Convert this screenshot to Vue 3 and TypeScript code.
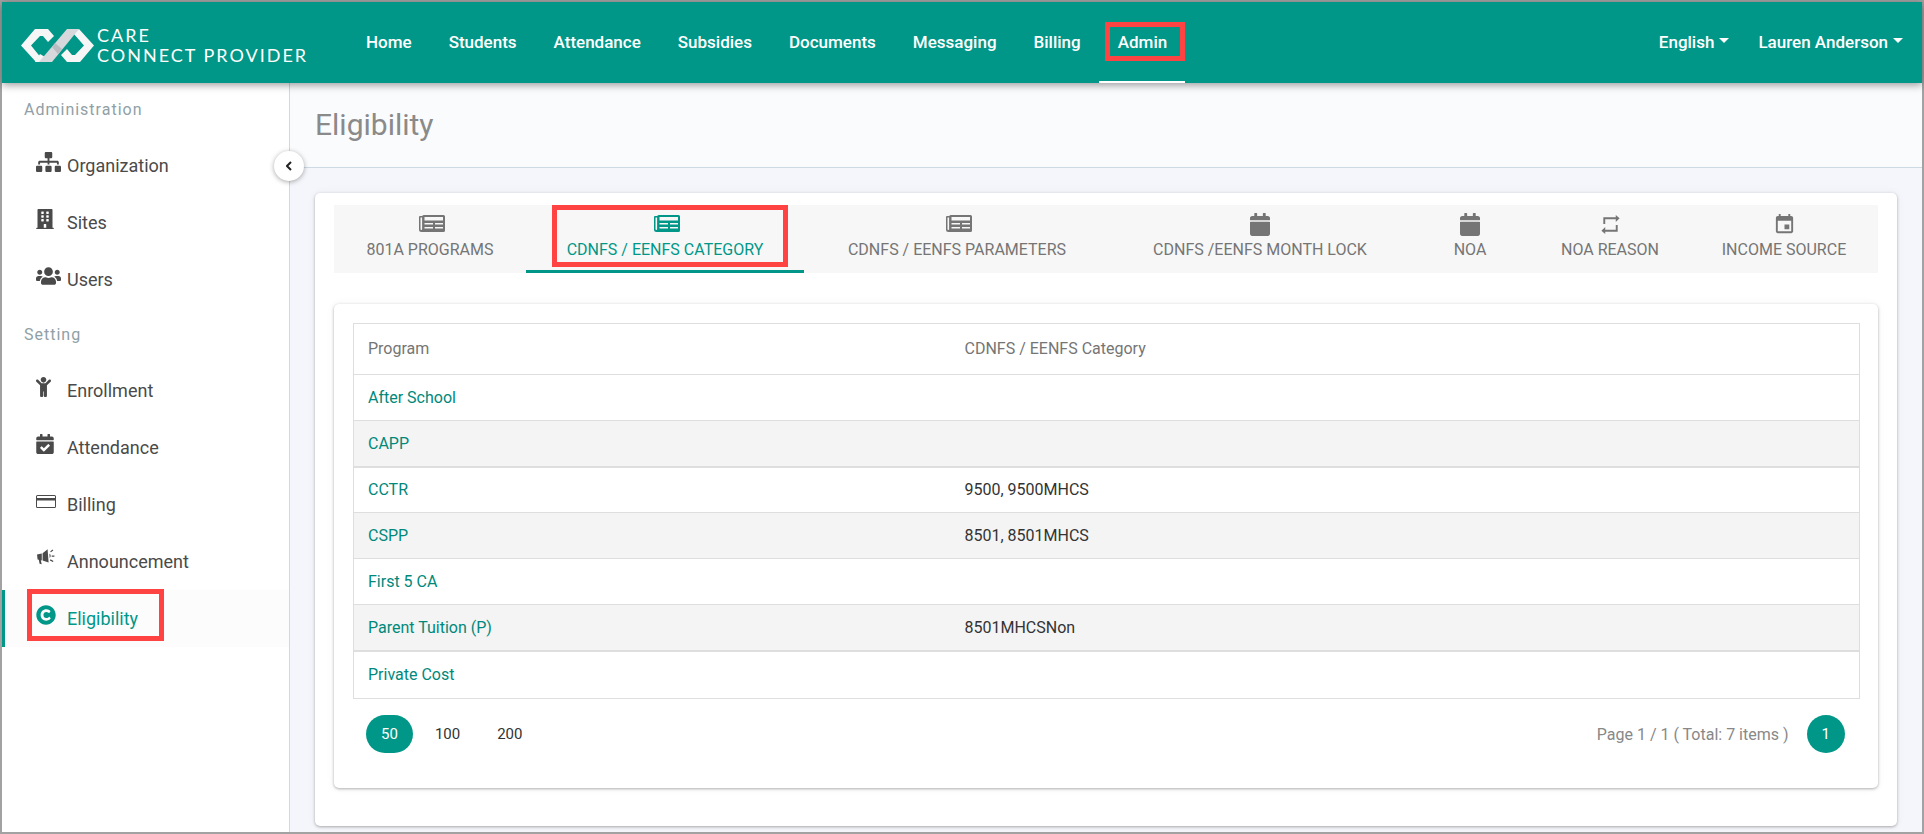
<script setup lang="ts">
import { ref } from 'vue'

interface Icon {
  box: string
  width: number
  height: number
  path: string
}

interface SideLink {
  label: string
  icon: string
  marked?: boolean
}

const icons: Record<string, Icon> = {
  sitemap: {
    box: '0 0 640 512', width: 25, height: 20,
    path: 'M128 352H32c-17.67 0-32 14.33-32 32v96c0 17.67 14.33 32 32 32h96c17.67 0 32-14.33 32-32v-96c0-17.67-14.33-32-32-32zm-24-80h192v48h48v-48h192v48h48v-57.59c0-21.17-17.23-38.41-38.41-38.41H344v-64h40c17.67 0 32-14.33 32-32V32c0-17.67-14.33-32-32-32H256c-17.67 0-32 14.33-32 32v96c0 17.67 14.33 32 32 32h40v64H94.41C73.23 224 56 241.23 56 262.41V320h48v-48zm264 80h-96c-17.67 0-32 14.33-32 32v96c0 17.67 14.33 32 32 32h96c17.67 0 32-14.33 32-32v-96c0-17.67-14.33-32-32-32zm240 0h-96c-17.67 0-32 14.33-32 32v96c0 17.67 14.33 32 32 32h96c17.67 0 32-14.33 32-32v-96c0-17.67-14.33-32-32-32z',
  },
  building: {
    box: '0 0 448 512', width: 18, height: 20,
    path: 'M436 480h-20V24c0-13.255-10.745-24-24-24H56C42.745 0 32 10.745 32 24v456H12c-6.627 0-12 5.373-12 12v20h448v-20c0-6.627-5.373-12-12-12zM128 76c0-6.627 5.373-12 12-12h40c6.627 0 12 5.373 12 12v40c0 6.627-5.373 12-12 12h-40c-6.627 0-12-5.373-12-12V76zm0 96c0-6.627 5.373-12 12-12h40c6.627 0 12 5.373 12 12v40c0 6.627-5.373 12-12 12h-40c-6.627 0-12-5.373-12-12v-40zm52 148h-40c-6.627 0-12-5.373-12-12v-40c0-6.627 5.373-12 12-12h40c6.627 0 12 5.373 12 12v40c0 6.627-5.373 12-12 12zm76 160h-64v-84c0-6.627 5.373-12 12-12h40c6.627 0 12 5.373 12 12v84zm64-172c0 6.627-5.373 12-12 12h-40c-6.627 0-12-5.373-12-12v-40c0-6.627 5.373-12 12-12h40c6.627 0 12 5.373 12 12v40zm0-96c0 6.627-5.373 12-12 12h-40c-6.627 0-12-5.373-12-12v-40c0-6.627 5.373-12 12-12h40c6.627 0 12 5.373 12 12v40zm0-96c0 6.627-5.373 12-12 12h-40c-6.627 0-12-5.373-12-12V76c0-6.627 5.373-12 12-12h40c6.627 0 12 5.373 12 12v40z',
  },
  users: {
    box: '0 0 640 512', width: 25, height: 20,
    path: 'M96 224c35.3 0 64-28.7 64-64s-28.7-64-64-64-64 28.7-64 64 28.7 64 64 64zm448 0c35.3 0 64-28.7 64-64s-28.7-64-64-64-64 28.7-64 64 28.7 64 64 64zm32 32h-64c-17.6 0-33.5 7.1-45.1 18.6 40.3 22.1 68.9 62 75.1 109.4h66c17.7 0 32-14.3 32-32v-32c0-35.3-28.7-64-64-64zm-256 0c61.9 0 112-50.1 112-112S381.9 32 320 32 208 82.1 208 144s50.1 112 112 112zm76.8 32h-8.3c-20.8 10-43.9 16-68.5 16s-47.6-6-68.5-16h-8.3C179.6 288 128 339.6 128 403.2V432c0 26.5 21.5 48 48 48h288c26.5 0 48-21.5 48-48v-28.8c0-63.6-51.6-115.2-115.2-115.2zm-223.7-13.4C161.5 263.1 145.6 256 128 256H64c-35.3 0-64 28.7-64 64v32c0 17.7 14.3 32 32 32h65.9c6.3-47.4 34.9-87.3 75.2-109.4z',
  },
  child: {
    box: '0 0 384 512', width: 15, height: 20,
    path: 'M120 72c0-39.765 32.235-72 72-72s72 32.235 72 72c0 39.764-32.235 72-72 72s-72-32.236-72-72zm254.627 1.373c-12.496-12.497-32.758-12.497-45.254 0L242.745 160H141.254L54.627 73.373c-12.496-12.497-32.758-12.497-45.254 0-12.497 12.497-12.497 32.758 0 45.255L104 213.254V480c0 17.673 14.327 32 32 32h16c17.673 0 32-14.327 32-32V368h16v112c0 17.673 14.327 32 32 32h16c17.673 0 32-14.327 32-32V213.254l94.627-94.627c12.497-12.497 12.497-32.757 0-45.254z',
  },
  calendarCheck: {
    box: '0 0 448 512', width: 18, height: 20,
    path: 'M436 160H12c-6.627 0-12-5.373-12-12v-36c0-26.51 21.49-48 48-48h48V12c0-6.627 5.373-12 12-12h40c6.627 0 12 5.373 12 12v52h128V12c0-6.627 5.373-12 12-12h40c6.627 0 12 5.373 12 12v52h48c26.51 0 48 21.49 48 48v36c0 6.627-5.373 12-12 12zM12 192h424c6.627 0 12 5.373 12 12v260c0 26.51-21.49 48-48 48H48c-26.51 0-48-21.49-48-48V204c0-6.627 5.373-12 12-12zm333.296 95.947l-28.169-28.398c-4.667-4.705-12.265-4.736-16.97-.068L194.12 364.665l-45.98-46.352c-4.667-4.705-12.266-4.736-16.971-.068l-28.397 28.17c-4.705 4.667-4.736 12.265-.068 16.97l82.601 83.269c4.667 4.705 12.265 4.736 16.97.068l142.953-141.805c4.705-4.667 4.736-12.265.068-16.97z',
  },
  card: {
    box: '0 0 20 20', width: 20, height: 20,
    path: 'M1.500 4h17a1.500 1.500 0 0 1 1.500 1.500v10a1.500 1.500 0 0 1-1.500 1.500h-17a1.500 1.500 0 0 1-1.500-1.500v-10a1.500 1.500 0 0 1 1.500-1.500zM1 5.500v1.500h18v-1.500a.5.5 0 0 0-.5-.5h-17a.5.5 0 0 0-.5.5zM1 9.500v6a.5.5 0 0 0 .5.5h17a.5.5 0 0 0 .5-.5v-6z',
  },
  megaphone: {
    box: '0 0 20 20', width: 20, height: 20,
    path: 'M1 6.500 5.800 5.600 5.800 12.400 4.800 12.200 5.700 16.200 3.600 15.700 2.800 11.800 1.600 11.600ZM6.600 5.300 11.600 1.200 12.600 14.400 6.600 12.500ZM13.400 5.700c1.600.4 1.700 3.600.3 4.200zM14.200 3.400l2.300-1.800.8 1-2.400 1.700zM15.700 7.500h2.700v1.300h-2.700zM14.500 11.300l3 1.600-.6 1.100-3-1.600z',
  },
  copyright: {
    box: '0 0 512 512', width: 20, height: 20,
    path: 'M256 8C119.033 8 8 119.033 8 256s111.033 248 248 248 248-111.033 248-248S392.967 8 256 8zm117.134 346.753c-1.592 1.867-39.776 45.731-109.851 45.731-84.692 0-144.484-63.260-144.484-145.567 0-81.303 62.004-143.401 143.762-143.401 66.957 0 101.965 37.315 103.422 38.904a12 12 0 0 1 1.238 14.623l-22.380 34.655c-4.049 6.267-12.774 7.351-18.234 2.295-.233-.214-26.529-23.880-61.880-23.880-46.116 0-73.916 33.575-73.916 76.082 0 39.602 25.514 79.692 74.277 79.692 38.697 0 65.280-28.338 65.544-28.625 5.132-5.565 14.059-5.033 18.508 1.053l24.547 33.572a12.001 12.001 0 0 1-.553 14.866z',
  },
  tableList: {
    box: '-3 0 29 23', width: 29, height: 23,
    path: 'M5 2H24.500a1.500 1.500 0 0 1 1.500 1.500V17.500a1.500 1.500 0 0 1-1.500 1.500H2.500a2.500 2.500 0 0 1-2.500-2.500V4a1 1 0 0 1 1-1H3.200A2 2 0 0 1 5 2ZM1.500 4.500V16.200a.8.8 0 0 0 1.600 0V4.500ZM5.500 4V7.500H24V4ZM5.500 10V11.500H14V10ZM16 10V11.500H24V10ZM5.500 14V15.500H14V14ZM16 14V15.500H24V14Z',
  },
  calendar: {
    box: '0 0 448 512', width: 20, height: 23,
    path: 'M12 192h424c6.600 0 12 5.400 12 12v260c0 26.500-21.500 48-48 48H48c-26.500 0-48-21.500-48-48V204c0-6.600 5.400-12 12-12zm436-44v-36c0-26.500-21.500-48-48-48h-48V12c0-6.600-5.400-12-12-12h-40c-6.600 0-12 5.400-12 12v52H160V12c0-6.600-5.400-12-12-12h-40c-6.600 0-12 5.400-12 12v52H48C21.500 64 0 85.500 0 112v36c0 6.600 5.400 12 12 12h424c6.600 0 12-5.400 12-12z',
  },
  repeat: {
    box: '0 0 24 24', width: 23, height: 23,
    path: 'M6.500 6.500h11v3l4-4-4-3.500v2.500h-13v7h2zM17.500 17.500h-11v-3l-4 4 4 3.500v-2.500h13v-7h-2z',
  },
  event: {
    box: '0 0 24 24', width: 23, height: 23,
    path: 'M17 12h-5v5h5v-5zM16 1v2H8V1H6v2H5c-1.110 0-1.990.9-1.990 2L3 19c0 1.100.890 2 2 2h14c1.100 0 2-.9 2-2V5c0-1.100-.9-2-2-2h-1V1h-2zm3 18H5V8h14v11z',
  },
}

const navLinks = ['Home', 'Students', 'Attendance', 'Subsidies', 'Documents', 'Messaging', 'Billing', 'Admin']
const activeNav = ref('Admin')

const sections: { title: string; links: SideLink[] }[] = [
  {
    title: 'Administration',
    links: [
      { label: 'Organization', icon: 'sitemap' },
      { label: 'Sites', icon: 'building' },
      { label: 'Users', icon: 'users' },
    ],
  },
  {
    title: 'Setting',
    links: [
      { label: 'Enrollment', icon: 'child' },
      { label: 'Attendance', icon: 'calendarCheck' },
      { label: 'Billing', icon: 'card' },
      { label: 'Announcement', icon: 'megaphone' },
      { label: 'Eligibility', icon: 'copyright', marked: true },
    ],
  },
]
const activeSide = ref('Eligibility')

const tabs = [
  { label: '801A PROGRAMS', icon: 'tableList' },
  { label: 'CDNFS / EENFS CATEGORY', icon: 'tableList' },
  { label: 'CDNFS / EENFS PARAMETERS', icon: 'tableList' },
  { label: 'CDNFS /EENFS MONTH LOCK', icon: 'calendar' },
  { label: 'NOA', icon: 'calendar' },
  { label: 'NOA REASON', icon: 'repeat' },
  { label: 'INCOME SOURCE', icon: 'event' },
]
const activeTab = ref('CDNFS / EENFS CATEGORY')

const programs = [
  { name: 'After School', category: '' },
  { name: 'CAPP', category: '' },
  { name: 'CCTR', category: '9500, 9500MHCS' },
  { name: 'CSPP', category: '8501, 8501MHCS' },
  { name: 'First 5 CA', category: '' },
  { name: 'Parent Tuition (P)', category: '8501MHCSNon' },
  { name: 'Private Cost', category: '' },
]

const pageSizes = [50, 100, 200]
const pageSize = ref(50)
</script>

<template>
  <div class="app">
    <header class="topbar">
      <a class="brand" href="#" aria-label="Care Connect Provider">
        <svg class="brand-mark" viewBox="0 0 73 33" width="73" height="33" aria-hidden="true">
          <path fill="#f6f6f6" d="M14 0H27L33 7L27 13L22 7H19L10 16.500L21 30L15 33L0 16.500Z" />
          <path fill="#f6f6f6" d="M59 33H46L40 26L46 20L51 26H54L63 16.500L52 4L58 0L73 16.500Z" />
          <path fill="#f6f6f6" d="M14 33H20L24 28L19 25Z" />
          <path fill="#d6d8dc" d="M46 0H58L31 33H18Z" />
          <path fill="#b9bcc0" d="M34 14L41 20L37 25L31 18Z" />
        </svg>
        <span class="brand-text">
          <span>CARE</span>
          <span>CONNECT PROVIDER</span>
        </span>
      </a>
      <nav class="main-nav" aria-label="Main">
        <a
          v-for="link in navLinks"
          :key="link"
          href="#"
          :class="{ active: link === activeNav }"
          @click.prevent="activeNav = link"
        >{{ link }}<span v-if="link === 'Admin'" class="mark mark-nav"></span></a>
      </nav>
      <div class="user-nav">
        <button type="button">English<span class="caret"></span></button>
        <button type="button">Lauren Anderson<span class="caret"></span></button>
      </div>
    </header>

    <div class="body">
      <aside class="sidebar">
        <section v-for="section in sections" :key="section.title">
          <h2>{{ section.title }}</h2>
          <a
            v-for="link in section.links"
            :key="link.label"
            href="#"
            class="side-link"
            :class="{ active: link.label === activeSide }"
            @click.prevent="activeSide = link.label"
          >
            <span class="side-icon">
              <svg
                :viewBox="icons[link.icon].box"
                :width="icons[link.icon].width"
                :height="icons[link.icon].height"
                aria-hidden="true"
              >
                <path fill="currentColor" fill-rule="evenodd" :d="icons[link.icon].path" />
              </svg>
            </span>
            <span class="side-label">{{ link.label }}</span>
            <span v-if="link.marked" class="mark mark-side"></span>
          </a>
        </section>
        <button type="button" class="collapse" aria-label="Collapse sidebar">
          <svg viewBox="0 0 6 10" width="6" height="10" aria-hidden="true">
            <path d="M5 1L1 5L5 9" fill="none" stroke="#222" stroke-width="2" />
          </svg>
        </button>
      </aside>

      <main class="content">
        <div class="page-head">
          <h1>Eligibility</h1>
        </div>
        <div class="card outer">
          <div class="tabs" role="tablist">
            <button
              v-for="tab in tabs"
              :key="tab.label"
              type="button"
              role="tab"
              class="tab"
              :class="{ active: tab.label === activeTab }"
              :aria-selected="tab.label === activeTab"
              @click="activeTab = tab.label"
            >
              <svg
                :viewBox="icons[tab.icon].box"
                :width="icons[tab.icon].width"
                :height="icons[tab.icon].height"
                aria-hidden="true"
              >
                <path fill="currentColor" fill-rule="evenodd" :d="icons[tab.icon].path" />
              </svg>
              <span>{{ tab.label }}</span>
              <span v-if="tab.label === 'CDNFS / EENFS CATEGORY'" class="mark mark-tab"></span>
            </button>
          </div>

          <div class="card inner">
            <table>
              <thead>
                <tr>
                  <th scope="col" class="col-program">Program</th>
                  <th scope="col">CDNFS / EENFS Category</th>
                </tr>
              </thead>
              <tbody>
                <tr v-for="row in programs" :key="row.name">
                  <td><a href="#">{{ row.name }}</a></td>
                  <td>{{ row.category }}</td>
                </tr>
              </tbody>
            </table>
            <div class="pager">
              <div class="sizes">
                <button
                  v-for="size in pageSizes"
                  :key="size"
                  type="button"
                  class="pill"
                  :class="{ active: size === pageSize }"
                  @click="pageSize = size"
                >{{ size }}</button>
              </div>
              <div class="pages">
                <span>Page 1 / 1 ( Total: 7 items )</span>
                <button type="button" class="pill active">1</button>
              </div>
            </div>
          </div>
        </div>
      </main>
    </div>
  </div>
</template>

<style>
body {
  margin: 0;
}
</style>

<style scoped>
.app {
  box-sizing: border-box;
  display: flex;
  flex-direction: column;
  min-height: 100vh;
  border: 2px solid #a2a2a2;
  background: #f5f6fb;
  color: #333;
  font-family: Roboto, "Liberation Sans", sans-serif;
  font-size: 16px;
}

a {
  text-decoration: none;
}

button {
  border: 0;
  background: none;
  font: inherit;
  cursor: pointer;
}

svg {
  display: block;
}

.topbar {
  position: relative;
  z-index: 2;
  display: flex;
  align-items: stretch;
  height: 81px;
  padding: 0 19px;
  background: #009788;
  box-shadow: 0 2px 8px rgba(0, 0, 0, 0.4);
}

.brand {
  display: flex;
  align-items: center;
  box-sizing: border-box;
  gap: 3px;
  width: 326px;
  padding-top: 5px;
  color: #fff;
}

.brand-text {
  display: flex;
  flex-direction: column;
  font-family: Lato, sans-serif;
  font-size: 18px;
  line-height: 20px;
  letter-spacing: 2px;
  white-space: nowrap;
}

.main-nav {
  display: flex;
}

.main-nav a {
  position: relative;
  display: flex;
  align-items: center;
  padding: 0 18px 0 19px;
  border-bottom: 2px solid transparent;
  color: #fff;
  font-size: 17px;
  font-weight: 500;
}

.main-nav a.active {
  border-bottom-color: #fff;
}

.user-nav {
  display: flex;
  gap: 29px;
  margin-left: auto;
  border-bottom: 2px solid transparent;
}

.user-nav button {
  display: flex;
  align-items: center;
  gap: 5px;
  padding: 0;
  color: #fff;
  font-size: 17px;
  font-weight: 500;
}

.caret {
  margin-bottom: 3px;
  border: 5px solid transparent;
  border-top-color: #fff;
  border-bottom: 0;
}

.mark {
  position: absolute;
  border: 5px solid #ff4242;
  pointer-events: none;
}

.mark-nav {
  inset: 20px 0 20px 6px;
}

.mark-side {
  inset: -1px 125px 6px 22px;
}

.mark-tab {
  inset: 0 16px 3px 26px;
}

.body {
  display: flex;
  flex: 1;
}

.sidebar {
  position: relative;
  flex: none;
  width: 287px;
  border-right: 1px solid #d3d8dc;
  background: #fff;
}

.sidebar h2 {
  margin: 0;
  padding: 15px 22px;
  color: #90a0a6;
  font-size: 16px;
  font-weight: 400;
  line-height: 24px;
  letter-spacing: 1px;
}

.side-link {
  position: relative;
  display: flex;
  height: 57px;
  border-left: 3px solid transparent;
  box-sizing: border-box;
  padding-left: 31px;
  color: #4a4a4a;
  font-size: 18px;
}

.side-icon {
  width: 31px;
  padding-top: 15px;
}

.side-label {
  line-height: 57px;
}

.side-link.active {
  border-left-color: #009788;
  background: #fcfcfc;
  color: #009788;
}

.collapse {
  position: absolute;
  top: 68px;
  right: -15px;
  z-index: 1;
  display: grid;
  place-items: center;
  width: 30px;
  height: 30px;
  padding: 0;
  border-radius: 50%;
  background: #fff;
  box-shadow: 0 1px 5px rgba(0, 0, 0, 0.35);
}

.content {
  flex: 1;
  min-width: 0;
}

.page-head {
  padding: 22px 25px;
  border-bottom: 1px solid #cdd9e3;
  background: #fafbfd;
}

h1 {
  margin: 0;
  color: #8a8a8a;
  font-size: 30px;
  font-weight: 400;
  line-height: 40px;
}

.card {
  border-radius: 5px;
  background: #fff;
  box-shadow: 0 1px 3px rgba(0, 0, 0, 0.3), 0 0 10px rgba(0, 0, 0, 0.05);
}

.outer {
  margin: 25px 25px 6px;
  padding: 12px 19px 38px;
}

.tabs {
  display: grid;
  grid-template-columns: 192fr 278fr 306fr 300fr 120fr 160fr 188fr;
  background: #f7f7f7;
}

.tab {
  position: relative;
  display: flex;
  flex-direction: column;
  align-items: center;
  height: 68px;
  padding: 8px 0 0;
  border-bottom: 3px solid transparent;
  color: #757575;
  line-height: 28px;
}

.tab.active {
  border-bottom-color: #009788;
  color: #009788;
}

.inner {
  margin-top: 31px;
  padding: 19px 18px 35px 19px;
}

table {
  width: 100%;
  border: 1px solid #dedede;
  border-collapse: collapse;
  table-layout: fixed;
}

th,
td {
  box-sizing: border-box;
  padding: 0 14px;
  border-bottom: 1px solid #dedede;
  font-weight: 400;
  text-align: left;
}

th {
  height: 51px;
  padding-bottom: 2px;
  color: #757575;
}

.col-program {
  width: 597px;
}

td {
  height: 46px;
}

td a {
  color: #00897b;
}

tbody tr:nth-child(even) {
  background: #f4f4f4;
}

tbody tr:nth-child(4n + 2) td {
  border-bottom-width: 2px;
}

tbody tr:last-child td {
  height: 48px;
}

.pager {
  display: flex;
  justify-content: space-between;
  padding: 16px 15px 0 13px;
}

.sizes,
.pages {
  display: flex;
  align-items: center;
  gap: 7px;
}

.pages {
  gap: 18px;
  color: #888;
}

.pill {
  height: 38px;
  padding: 0 15px;
  border-radius: 19px;
  color: #333;
  font-size: 15px;
}

.pill.active {
  background: #009788;
  color: #fff;
}
</style>
